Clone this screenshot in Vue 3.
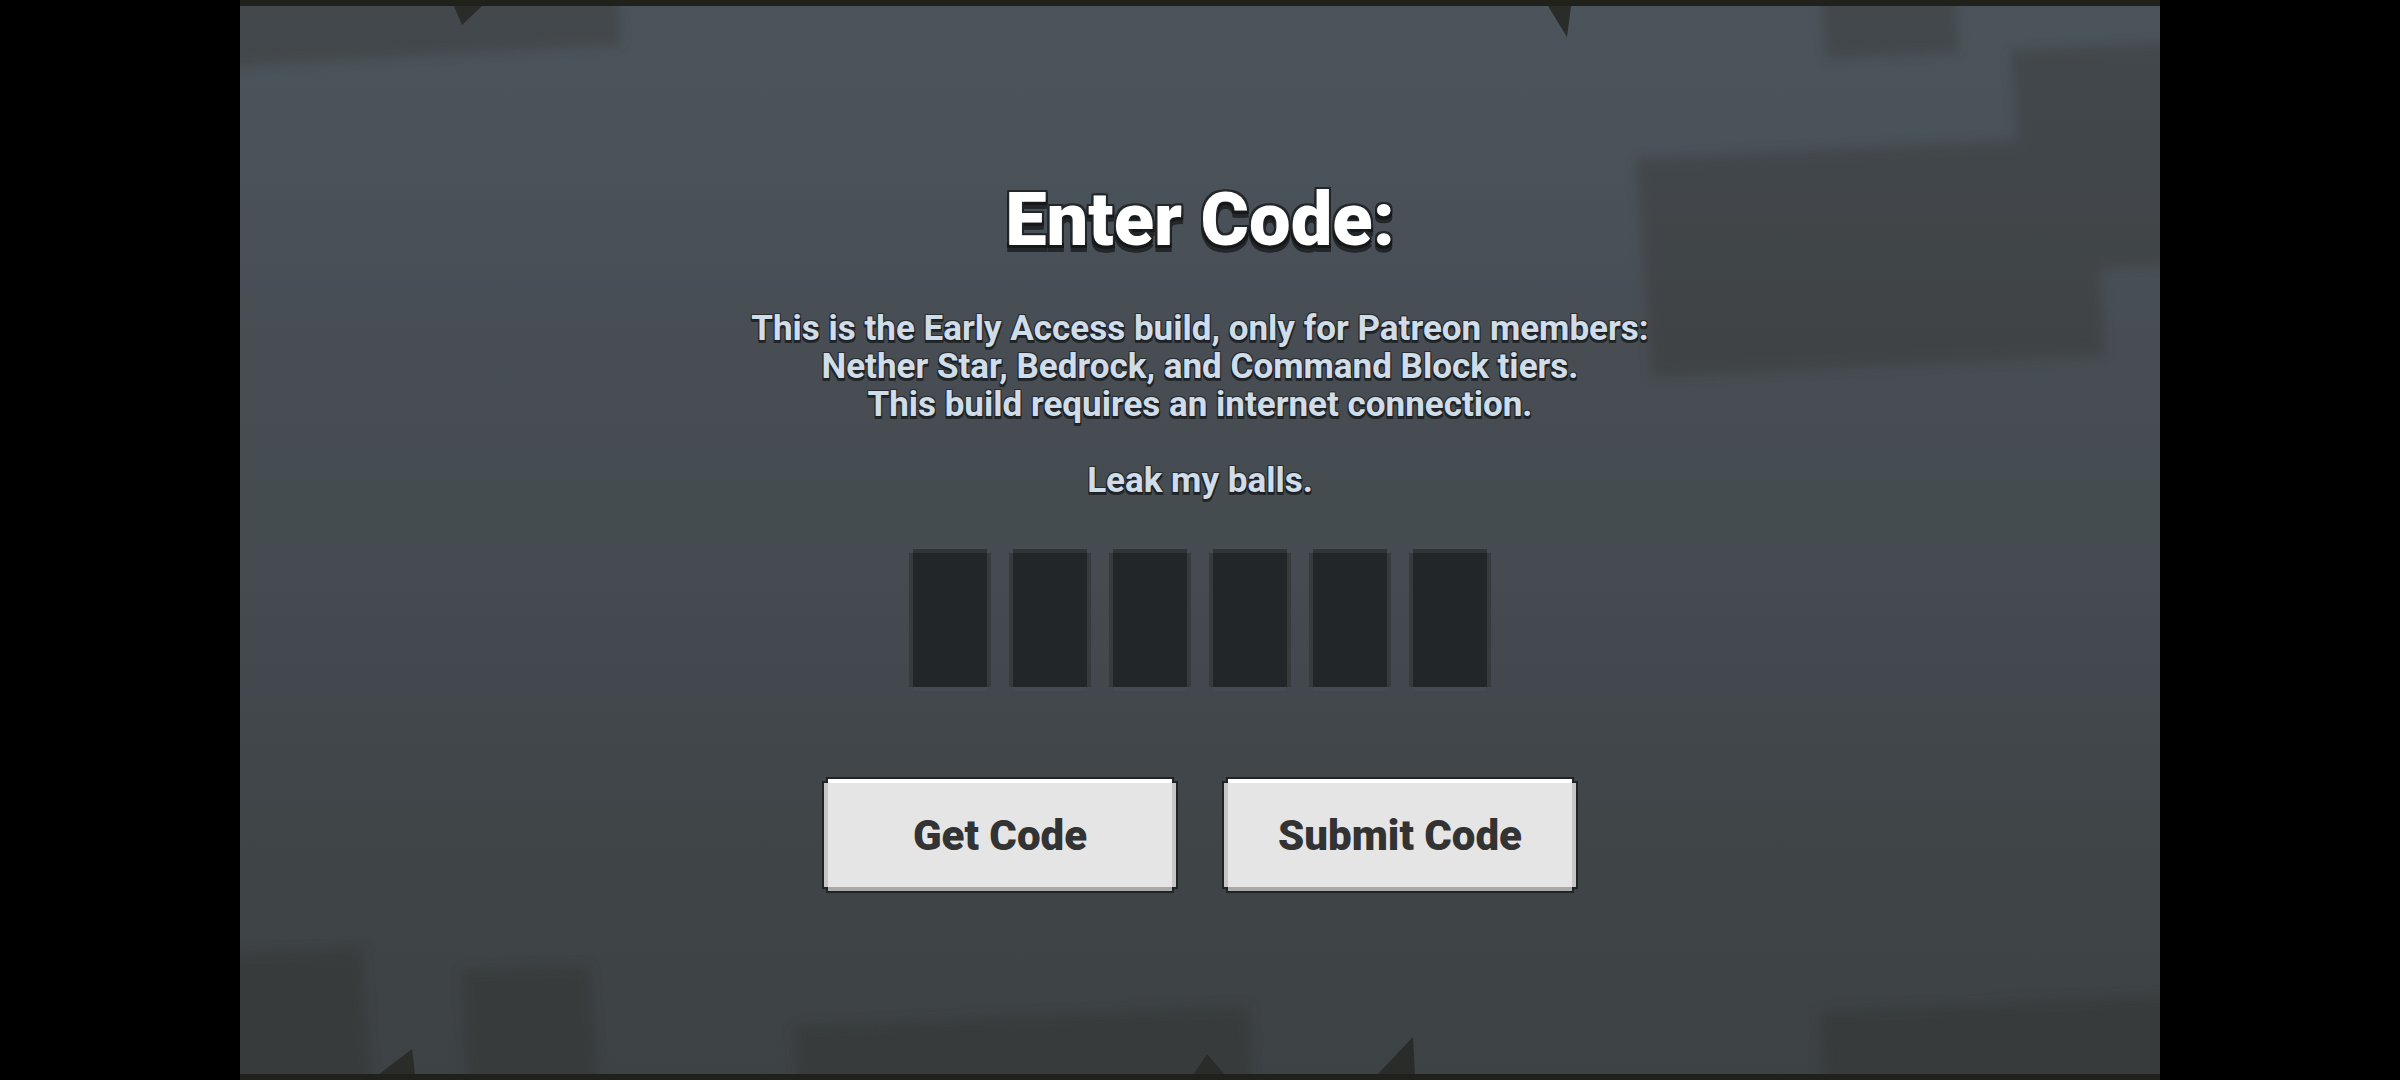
<script setup>
import { ref } from 'vue'

const code = ref(['', '', '', '', '', ''])
</script>

<template>
  <div class="screen">
    <main class="stage">
      <svg class="backdrop" viewBox="0 0 1920 1080" preserveAspectRatio="none" aria-hidden="true">
        <defs>
          <filter id="soft" x="-5%" y="-5%" width="110%" height="110%">
            <feGaussianBlur stdDeviation="6" />
          </filter>
        </defs>
        <g filter="url(#soft)" class="far">
          <path d="M-30 -20H376L381 44L-30 67Z" />
          <path d="M1581 -20L1586 58L1718 52L1713 -20Z" />
          <path d="M1396 159L1777 140L1771 51L1950 42V264L1859 268L1865 355L1412 377Z" />
        </g>
        <g filter="url(#soft)" class="near">
          <path d="M-30 955L122 947L131 1100H-30Z" />
          <path d="M222 971L349 965L359 1100H229Z" />
          <path d="M554 1027L1008 1006L1013 1100H559Z" />
          <path d="M1580 1012L1950 994V1100H1586Z" />
        </g>
        <g class="spikes">
          <path d="M214 6H242L222 25Z" />
          <path d="M1308 6H1331L1327 37Z" />
          <path d="M138 1075L172 1049L175 1075Z" />
          <path d="M953 1075L967 1054L985 1075Z" />
          <path d="M1137 1075L1173 1037L1175 1075Z" />
        </g>
        <rect class="edge" width="1920" height="6" />
        <rect class="edge" y="1074" width="1920" height="6" />
      </svg>

      <form class="panel" @submit.prevent>
        <h1>Enter Code:</h1>
        <p>
          This is the Early Access build, only for Patreon members:<br />
          Nether Star, Bedrock, and Command Block tiers.<br />
          This build requires an internet connection.<br />
          <br />
          Leak my balls.
        </p>
        <div class="slots">
          <input
            v-for="(_, i) in code"
            :key="i"
            v-model="code[i]"
            class="slot"
            type="text"
            maxlength="1"
            :aria-label="`Code character ${i + 1}`"
          />
        </div>
        <div class="actions">
          <button type="button"><span>Get Code</span></button>
          <button type="submit"><span>Submit Code</span></button>
        </div>
      </form>
    </main>
  </div>
</template>

<style>
body {
  margin: 0;
  background: #000;
}
</style>

<style scoped>
.screen {
  display: flex;
  justify-content: center;
  min-height: 100vh;
  background: #000;
  font-family: Roboto, "Liberation Sans", sans-serif;
}

.stage {
  position: relative;
  width: 100%;
  max-width: calc(100vh * 16 / 9);
  overflow: hidden;
  background: linear-gradient(
    #4b545b 0%,
    #4a525a 15%,
    #474d53 32%,
    #454c50 50%,
    #454a51 56%,
    #43484f 63%,
    #41474a 67%,
    #41464b 71%,
    #404548 76%,
    #3d4245 100%
  );
}

.backdrop {
  position: absolute;
  inset: 0;
  width: 100%;
  height: 100%;
}

.far {
  fill: #353632;
  opacity: 0.38;
}

.near {
  fill: #303531;
  opacity: 0.5;
}

.spikes {
  fill: #2a2c29;
}

.edge {
  fill: #21211c;
}

.panel {
  position: relative;
  display: flex;
  flex-direction: column;
  align-items: center;
  padding: 178px 24px 0;
  text-align: center;
}

h1 {
  margin: 0;
  color: #fff;
  font-size: 74px;
  font-weight: 900;
  line-height: 84px;
  text-shadow:
    -2px -2px 0 #24272a, 0 -2px 0 #24272a, 2px -2px 0 #24272a,
    -2px 0 0 #16181a, 2px 0 0 #16181a,
    -2px 3px 0 #16181a, 0 3px 0 #16181a, 2px 3px 0 #16181a,
    -2px 7px 0 #24272a, 0 7px 0 #24272a, 2px 7px 0 #24272a;
}

p {
  margin: 48px 0 0;
  color: #cfdce9;
  font-size: 35px;
  font-weight: 700;
  line-height: 38px;
  text-shadow:
    -1px -1px 0 #2a2e31, 1px -1px 0 #2a2e31,
    -1px 1px 0 #1c1f21, 1px 1px 0 #1c1f21,
    -1px 3px 0 #24272a, 1px 3px 0 #24272a;
}

.slots {
  display: flex;
  gap: 18px;
  margin-top: 49px;
}

.slot {
  box-sizing: border-box;
  width: 82px;
  height: 142px;
  padding: 0;
  border: 4px solid;
  border-color: #303436 #383b3e #464a52;
  border-radius: 0;
  outline: none;
  background: #232628;
  color: #fff;
  font: 700 68px Roboto, "Liberation Sans", sans-serif;
  text-align: center;
}

.slot,
button,
button span {
  clip-path: polygon(
    4px 0, calc(100% - 4px) 0, calc(100% - 4px) 4px, 100% 4px,
    100% calc(100% - 4px), calc(100% - 4px) calc(100% - 4px), calc(100% - 4px) 100%, 4px 100%,
    4px calc(100% - 4px), 0 calc(100% - 4px), 0 4px, 4px 4px
  );
}

.actions {
  display: flex;
  gap: 44px;
  margin-top: 86px;
}

button {
  width: 356px;
  height: 116px;
  padding: 2px;
  border: 0;
  background: #202426;
  cursor: pointer;
}

button span {
  display: flex;
  align-items: center;
  justify-content: center;
  box-sizing: border-box;
  height: 112px;
  border: 4px solid;
  border-color: #fff #c6c6c6 #a8a9a8;
  background: #e5e5e5;
  color: #333;
  font: 900 42px Roboto, "Liberation Sans", sans-serif;
}
</style>
